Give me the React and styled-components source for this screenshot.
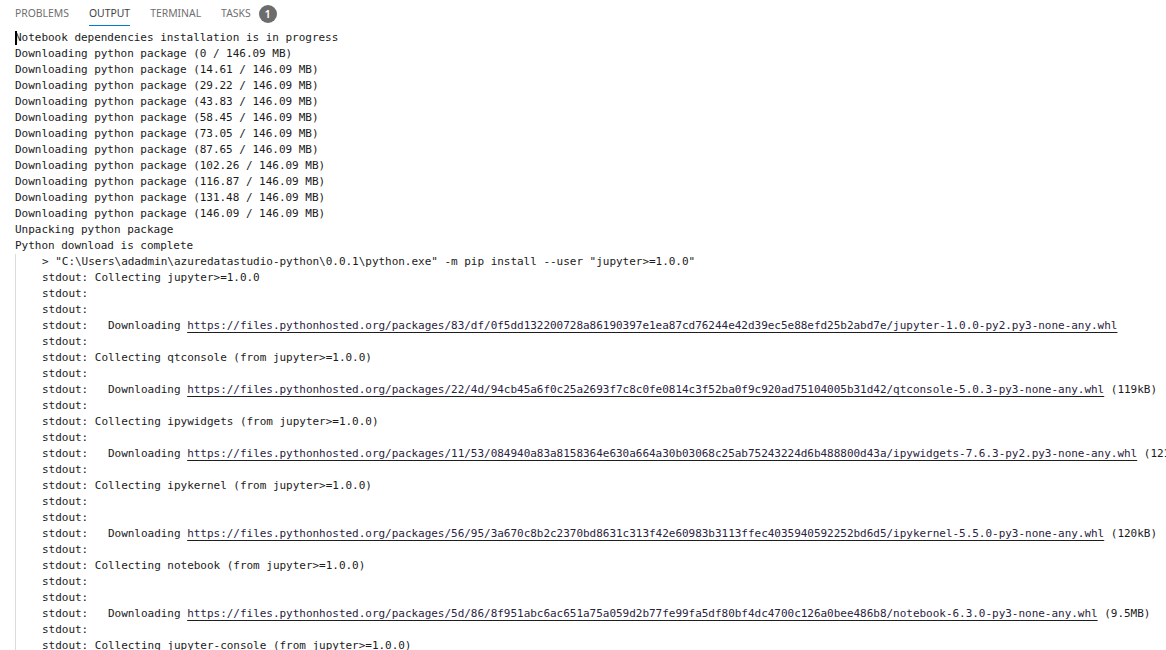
import React from "react";
import styled, { createGlobalStyle } from "styled-components";

const Global = createGlobalStyle`
  html, body { margin: 0; padding: 0; background: #ffffff; overflow: hidden; }
  body { width: 1166px; height: 650px; }
`;

const Panel = styled.div`
  width: 1166px;
  height: 650px;
  overflow: hidden;
  background: #ffffff;
  display: flex;
  flex-direction: column;
`;

const TabBar = styled.div`
  height: 29px;
  flex: none;
  display: flex;
  align-items: stretch;
  gap: 20px;
  padding-left: 15px;
  font-family: "Noto Sans", "Open Sans", sans-serif;
  font-size: 10.4px;
`;

const Tab = styled.div`
  display: flex;
  align-items: center;
  height: 26px;
  padding-top: 1px;
  color: ${(p) => (p.$active ? "#424242" : "#6f6f6f")};
  border-bottom: 1px solid ${(p) => (p.$active ? "#007acc" : "transparent")};
  box-sizing: border-box;
`;

const TabGroup = styled.div`
  display: flex;
  align-items: center;
  gap: 8px;
  height: 26px;
`;

const Badge = styled.span`
  width: 18px;
  height: 18px;
  margin-top: 1px;
  border-radius: 50%;
  background: #6c6c6c;
  color: #ffffff;
  font-size: 11px;
  font-weight: 600;
  display: flex;
  align-items: center;
  justify-content: center;
`;

const Output = styled.div`
  position: relative;
  flex: 1;
  padding-top: 1px;
  font-family: "DejaVu Sans Mono", "Liberation Mono", monospace;
  font-size: 11px;
  letter-spacing: -0.025px;
  line-height: 16px;
  color: #1a1a1a;
  white-space: pre;
`;

const Line = styled.div`
  height: 16px;
  padding-left: ${(p) => (p.$indent ? "0" : "15px")};
`;

const Block = styled.div`
  margin-left: 15px;
  border-left: 1px solid #dcdcdc;
  padding-left: 26px;
`;

const Link = styled.span`
  text-decoration: underline;
  text-underline-offset: 3px;
  text-decoration-color: #1e1e1e;
  color: #2a2340;
`;

const Cursor = styled.span`
  position: absolute;
  left: 15px;
  top: 2px;
  width: 2px;
  height: 14px;
  background: #000000;
`;

const top = [
  "Notebook dependencies installation is in progress",
  "Downloading python package (0 / 146.09 MB)",
  "Downloading python package (14.61 / 146.09 MB)",
  "Downloading python package (29.22 / 146.09 MB)",
  "Downloading python package (43.83 / 146.09 MB)",
  "Downloading python package (58.45 / 146.09 MB)",
  "Downloading python package (73.05 / 146.09 MB)",
  "Downloading python package (87.65 / 146.09 MB)",
  "Downloading python package (102.26 / 146.09 MB)",
  "Downloading python package (116.87 / 146.09 MB)",
  "Downloading python package (131.48 / 146.09 MB)",
  "Downloading python package (146.09 / 146.09 MB)",
  "Unpacking python package",
  "Python download is complete",
];

const base = "https://files.pythonhosted.org/packages/";
const dl = (path, suffix) => ({ link: base + path, suffix });

const block = [
  '> "C:\\Users\\adadmin\\azuredatastudio-python\\0.0.1\\python.exe" -m pip install --user "jupyter>=1.0.0"',
  "stdout: Collecting jupyter>=1.0.0",
  "stdout:",
  "stdout:",
  dl("83/df/0f5dd132200728a86190397e1ea87cd76244e42d39ec5e88efd25b2abd7e/jupyter-1.0.0-py2.py3-none-any.whl", ""),
  "stdout:",
  "stdout: Collecting qtconsole (from jupyter>=1.0.0)",
  "stdout:",
  dl("22/4d/94cb45a6f0c25a2693f7c8c0fe0814c3f52ba0f9c920ad75104005b31d42/qtconsole-5.0.3-py3-none-any.whl", " (119kB)"),
  "stdout:",
  "stdout: Collecting ipywidgets (from jupyter>=1.0.0)",
  "stdout:",
  dl("11/53/084940a83a8158364e630a664a30b03068c25ab75243224d6b488800d43a/ipywidgets-7.6.3-py2.py3-none-any.whl", " (121kB)"),
  "stdout:",
  "stdout: Collecting ipykernel (from jupyter>=1.0.0)",
  "stdout:",
  "stdout:",
  dl("56/95/3a670c8b2c2370bd8631c313f42e60983b3113ffec4035940592252bd6d5/ipykernel-5.5.0-py3-none-any.whl", " (120kB)"),
  "stdout:",
  "stdout: Collecting notebook (from jupyter>=1.0.0)",
  "stdout:",
  "stdout:",
  dl("5d/86/8f951abc6ac651a75a059d2b77fe99fa5df80bf4dc4700c126a0bee486b8/notebook-6.3.0-py3-none-any.whl", " (9.5MB)"),
  "stdout:",
  "stdout: Collecting jupyter-console (from jupyter>=1.0.0)",
];

export default function App() {
  return (
    <>
      <Global />
      <Panel>
        <TabBar>
          <Tab>PROBLEMS</Tab>
          <Tab $active>OUTPUT</Tab>
          <Tab>TERMINAL</Tab>
          <TabGroup>
            <Tab>TASKS</Tab>
            <Badge>1</Badge>
          </TabGroup>
        </TabBar>
        <Output>
          <Cursor />
          {top.map((t, i) => (
            <Line key={i}>{t}</Line>
          ))}
          <Block>
            {block.map((t, i) =>
              typeof t === "string" ? (
                <Line key={i} $indent>
                  {t}
                </Line>
              ) : (
                <Line key={i} $indent>
                  {"stdout:   Downloading "}
                  <Link>{t.link}</Link>
                  {t.suffix}
                </Line>
              )
            )}
          </Block>
        </Output>
      </Panel>
    </>
  );
}
